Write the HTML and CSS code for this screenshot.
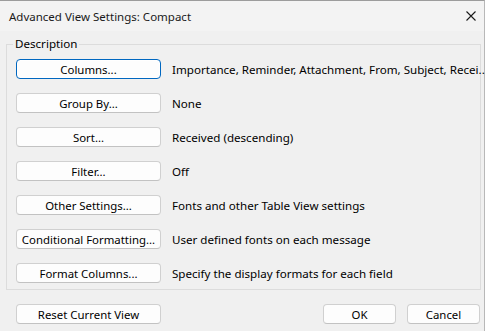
FILE: index.html
```html
<!DOCTYPE html>
<html lang="en">
<head>
    <meta charset="UTF-8">
    <title>Advanced View Settings: Compact</title>
    <link rel="stylesheet" href="styles.css">
</head>
<body>
    <div class="dialog">
        <div class="titlebar">
            <span class="title">Advanced View Settings: Compact</span>
            <button class="close" aria-label="Close">
                <svg width="10" height="10" viewBox="0 0 10 10">
                    <path d="M0.5 0.5 L9.5 9.5 M9.5 0.5 L0.5 9.5" stroke="#1a1a1a" stroke-width="1.1" fill="none"/>
                </svg>
            </button>
        </div>

        <div class="content">
            <fieldset class="group">
                <legend>Description</legend>
                <div class="row">
                    <button class="btn focused">Columns...</button>
                    <span class="desc">Importance, Reminder, Attachment, From, Subject, Recei...</span>
                </div>
                <div class="row">
                    <button class="btn">Group By...</button>
                    <span class="desc">None</span>
                </div>
                <div class="row">
                    <button class="btn">Sort...</button>
                    <span class="desc">Received (descending)</span>
                </div>
                <div class="row">
                    <button class="btn">Filter...</button>
                    <span class="desc">Off</span>
                </div>
                <div class="row">
                    <button class="btn">Other Settings...</button>
                    <span class="desc">Fonts and other Table View settings</span>
                </div>
                <div class="row">
                    <button class="btn">Conditional Formatting...</button>
                    <span class="desc">User defined fonts on each message</span>
                </div>
                <div class="row">
                    <button class="btn">Format Columns...</button>
                    <span class="desc">Specify the display formats for each field</span>
                </div>
            </fieldset>

            <div class="footer">
                <button class="btn">Reset Current View</button>
                <div class="actions">
                    <button class="btn btn-small">OK</button>
                    <button class="btn btn-small">Cancel</button>
                </div>
            </div>
        </div>
    </div>
</body>
</html>
```

FILE: styles.css
```css
* {
    margin: 0;
    padding: 0;
    box-sizing: border-box;
}

body {
    font-family: 'Noto Sans', 'Open Sans', sans-serif;
    font-size: 11.6px;
    color: #000;
    background: #f0f0f0;
}

.dialog {
    width: 485px;
    height: 331px;
    border-top: 1px solid #9c9c9c;
    border-right: 1px solid #b8b8b8;
    background: #f0f0f0;
}

.titlebar {
    height: 30px;
    background: #f3f3f3;
    display: flex;
    align-items: center;
    justify-content: space-between;
    padding: 0 7px 0 9px;
}

.title {
    font-size: 11.5px;
    color: #1a1a1a;
}

.close {
    border: none;
    background: none;
    width: 12px;
    height: 12px;
    display: flex;
    align-items: center;
    justify-content: center;
}

.content {
    padding: 5px 3px 0 6px;
}

.group {
    min-width: 0;
    border: 1px solid #dcdcdc;
    padding: 0 2px 6px 9px;
    display: flex;
    flex-direction: column;
    gap: 14px;
}

.group legend {
    padding: 0 2px;
    margin-left: -3px;
    line-height: 16px;
    margin-bottom: 7px;
}

.row {
    display: flex;
    align-items: center;
    gap: 11px;
}

.btn {
    font-family: inherit;
    font-size: 11.4px;
    color: #000;
    width: 145px;
    height: 20px;
    padding: 0;
    background: #fdfdfd;
    border: 1px solid #d0d0d0;
    border-bottom-color: #c2c2c2;
    border-radius: 4px;
    flex-shrink: 0;
    white-space: nowrap;
}

.btn.focused {
    border: 1px solid #0067c0;
    box-shadow: inset 0 0 0 1px #ffffff;
}

.desc {
    white-space: nowrap;
    min-width: 0;
}

.footer {
    display: flex;
    justify-content: space-between;
    align-items: center;
    margin-top: 14px;
    padding-left: 10px;
    padding-right: 1px;
}

.actions {
    display: flex;
    gap: 11px;
}

.btn-small {
    width: 73px;
}
```
